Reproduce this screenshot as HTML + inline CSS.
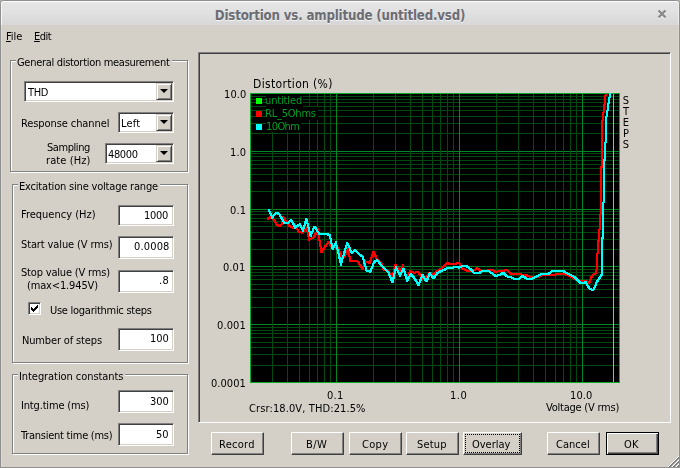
<!DOCTYPE html>
<html><head><meta charset="utf-8"><title>Distortion vs. amplitude (untitled.vsd)</title>
<style>
html,body{margin:0;padding:0;}
body{width:680px;height:468px;overflow:hidden;background:#b2aea6;position:relative;
 font-family:"DejaVu Sans Condensed","DejaVu Sans","Liberation Sans",sans-serif;font-size:11px;line-height:13px;color:#000;}
#win{position:absolute;left:0;top:0;width:678px;height:466px;background:#d4d0c8;border:1px solid #8f8f8f;border-radius:4px 4px 0 0;overflow:hidden;box-shadow:inset 1px 0 0 #dfdbd3,inset -1px 0 0 #dcd8d0;}
#tb{position:absolute;left:0;top:0;width:678px;height:24px;background:linear-gradient(#e7e7e7,#e0e0e0 50%,#d7d7d7);box-shadow:inset 0 1px 0 #fff,inset 1px 0 0 #fafafa,inset -1px 0 0 #ececec;border-radius:3px 3px 0 0;}
#title{position:absolute;left:-1px;top:7px;width:680px;text-align:center;font-weight:bold;font-size:13.2px;letter-spacing:-0.19px;line-height:16px;color:#6c6c74;text-shadow:0 1px 0 #f4f4f4;}
.t{position:absolute;white-space:nowrap;will-change:transform;}
.gb{position:absolute;border:1px solid #808080;box-shadow:1px 1px 0 #fff,inset 1px 1px 0 #fff;box-sizing:border-box;}
.gl{position:absolute;background:#d4d0c8;height:13px;}
.ed{position:absolute;box-sizing:border-box;background:#fff;border:1px solid;border-color:#808080 #fff #fff #808080;box-shadow:inset 1px 1px 0 #404040,inset -1px -1px 0 #d4d0c8;height:21px;}
.dd{position:absolute;right:1px;top:1px;width:16px;height:17px;box-sizing:border-box;background:#d4d0c8;border:1px solid;border-color:#d4d0c8 #404040 #404040 #d4d0c8;box-shadow:inset 1px 1px 0 #fff,inset -1px -1px 0 #808080;}
.dd:after{content:"";position:absolute;left:3px;top:5px;border:4px solid transparent;border-top-color:#000;border-bottom-width:0;}
.btn{position:absolute;box-sizing:border-box;height:23px;top:432px;background:#d4d0c8;border:1px solid;border-color:#fff #404040 #404040 #fff;box-shadow:inset -1px -1px 0 #808080;}
#frame{position:absolute;left:198px;top:52px;width:473px;height:371px;box-sizing:border-box;border:1px solid;border-color:#808080 #fff #fff #808080;box-shadow:inset 1px 1px 0 #404040,inset -1px -1px 0 #d4d0c8;}
#plot{position:absolute;left:0;top:0;}
</style></head>
<body>
<div id="win">
<div id="tb"></div>
<div id="title">Distortion vs. amplitude (untitled.vsd)</div>
<svg style="position:absolute;left:656px;top:8px" width="11" height="11" viewBox="0 0 11 11"><path d="M1.5 2.5L8.5 9.5M8.5 2.5L1.5 9.5" stroke="#fafafa" stroke-width="2.2" fill="none"/><path d="M1.5 1.5L8.5 8.5M8.5 1.5L1.5 8.5" stroke="#8a8a8a" stroke-width="2.4" fill="none"/></svg>
<svg style="position:absolute;left:666px;top:454px" width="13" height="13" viewBox="0 0 13 13" shape-rendering="crispEdges">
<path d="M12 1L1 12M12 5L5 12M12 9L9 12" stroke="#fff" stroke-width="1"/><path d="M12 2L2 12M12 3L3 12M12 6L6 12M12 7L7 12M12 10L10 12M12 11L11 12" stroke="#808080" stroke-width="1"/></svg>
</div>
<div class="t" style="left:6px;top:30px;letter-spacing:-0.05px;"><u>F</u>ile</div><div class="t" style="left:34px;top:30px;letter-spacing:-0.48px;"><u>E</u>dit</div>

<div class="gb" style="left:10px;top:60px;width:178px;height:112px"></div>
<div class="gl" style="left:16px;top:56px;width:156px"></div>
<div class="gb" style="left:12px;top:184px;width:176px;height:179px"></div>
<div class="gl" style="left:18px;top:180px;width:142px"></div>
<div class="gb" style="left:12px;top:374px;width:176px;height:80px"></div>
<div class="gl" style="left:18px;top:369px;width:107px"></div>
<div class="t" style="left:17px;top:56px;letter-spacing:-0.30px;">General distortion measurement</div><div class="t" style="left:19px;top:180px;letter-spacing:-0.19px;">Excitation sine voltage range</div><div class="t" style="left:19px;top:370px;letter-spacing:-0.07px;">Integration constants</div>

<div class="ed" style="left:24px;top:81px;width:150px"><i class="dd"></i></div>
<div class="ed" style="left:118px;top:112px;width:56px"><i class="dd"></i></div>
<div class="ed" style="left:105px;top:143px;width:69px"><i class="dd"></i></div>
<div class="t" style="left:28px;top:86px;letter-spacing:-0.40px;">THD</div><div class="t" style="left:21px;top:117px;letter-spacing:-0.09px;">Response channel</div><div class="t" style="left:121px;top:117px;letter-spacing:0.21px;">Left</div><div class="t" style="left:47px;top:141px;letter-spacing:-0.43px;">Sampling</div><div class="t" style="left:46px;top:154px;letter-spacing:0.10px;">rate (Hz)</div><div class="t" style="left:108px;top:148px;letter-spacing:-0.36px;">48000</div>

<div class="ed" style="left:118px;top:205px;width:56px"></div>
<div class="ed" style="left:118px;top:236px;width:56px;height:23px"></div>
<div class="ed" style="left:118px;top:270px;width:56px;height:23px"></div>
<div class="ed" style="left:28px;top:302px;width:13px;height:13px"></div>
<svg style="position:absolute;left:28px;top:302px" width="13" height="13" viewBox="0 0 13 13" shape-rendering="crispEdges"><path d="M3 5v3l2 2l5-5v-3l-5 5z" fill="#000"/></svg>
<div class="ed" style="left:118px;top:328px;width:56px;height:23px"></div>
<div class="ed" style="left:118px;top:390px;width:56px;height:23px"></div>
<div class="ed" style="left:118px;top:423px;width:56px;height:23px"></div>
<div class="t" style="left:21px;top:208px;letter-spacing:0.00px;">Frequency (Hz)</div><div class="t" style="left:144px;top:209px;letter-spacing:-0.27px;">1000</div><div class="t" style="left:21px;top:238px;letter-spacing:-0.12px;">Start value (V rms)</div><div class="t" style="left:134px;top:240px;letter-spacing:0.16px;">0.0008</div><div class="t" style="left:21px;top:266px;letter-spacing:-0.18px;">Stop value (V rms)</div><div class="t" style="left:27px;top:279px;letter-spacing:-0.15px;">(max&lt;1.945V)</div><div class="t" style="left:159px;top:274px;letter-spacing:0.32px;">.8</div><div class="t" style="left:50px;top:304px;letter-spacing:-0.27px;">Use logarithmic steps</div><div class="t" style="left:22px;top:334px;letter-spacing:-0.15px;">Number of steps</div><div class="t" style="left:150px;top:332px;letter-spacing:0.00px;">100</div><div class="t" style="left:21px;top:399px;letter-spacing:-0.17px;">Intg.time (ms)</div><div class="t" style="left:150px;top:395px;letter-spacing:-0.08px;">300</div><div class="t" style="left:21px;top:429px;letter-spacing:-0.25px;">Transient time (ms)</div><div class="t" style="left:156px;top:428px;letter-spacing:-0.16px;">50</div>

<div id="frame"></div>
<svg id="plot" width="680" height="468" viewBox="0 0 680 468" shape-rendering="crispEdges">
<rect x="250" y="93" width="370" height="290" fill="#000"/>
<rect x="251" y="151" width="368" height="1" fill="#008824"/><rect x="251" y="133" width="368" height="1" fill="#004a12"/><rect x="251" y="123" width="368" height="1" fill="#004a12"/><rect x="251" y="116" width="368" height="1" fill="#004a12"/><rect x="251" y="110" width="368" height="1" fill="#004a12"/><rect x="251" y="106" width="368" height="1" fill="#004a12"/><rect x="251" y="102" width="368" height="1" fill="#004a12"/><rect x="251" y="99" width="368" height="1" fill="#004a12"/><rect x="251" y="96" width="368" height="1" fill="#004a12"/><rect x="251" y="209" width="368" height="1" fill="#008824"/><rect x="251" y="191" width="368" height="1" fill="#004a12"/><rect x="251" y="181" width="368" height="1" fill="#004a12"/><rect x="251" y="174" width="368" height="1" fill="#004a12"/><rect x="251" y="168" width="368" height="1" fill="#004a12"/><rect x="251" y="164" width="368" height="1" fill="#004a12"/><rect x="251" y="160" width="368" height="1" fill="#004a12"/><rect x="251" y="156" width="368" height="1" fill="#004a12"/><rect x="251" y="153" width="368" height="1" fill="#004a12"/><rect x="251" y="266" width="368" height="1" fill="#008824"/><rect x="251" y="249" width="368" height="1" fill="#004a12"/><rect x="251" y="239" width="368" height="1" fill="#004a12"/><rect x="251" y="232" width="368" height="1" fill="#004a12"/><rect x="251" y="226" width="368" height="1" fill="#004a12"/><rect x="251" y="221" width="368" height="1" fill="#004a12"/><rect x="251" y="218" width="368" height="1" fill="#004a12"/><rect x="251" y="214" width="368" height="1" fill="#004a12"/><rect x="251" y="211" width="368" height="1" fill="#004a12"/><rect x="251" y="324" width="368" height="1" fill="#008824"/><rect x="251" y="307" width="368" height="1" fill="#004a12"/><rect x="251" y="297" width="368" height="1" fill="#004a12"/><rect x="251" y="289" width="368" height="1" fill="#004a12"/><rect x="251" y="284" width="368" height="1" fill="#004a12"/><rect x="251" y="279" width="368" height="1" fill="#004a12"/><rect x="251" y="275" width="368" height="1" fill="#004a12"/><rect x="251" y="272" width="368" height="1" fill="#004a12"/><rect x="251" y="269" width="368" height="1" fill="#004a12"/><rect x="251" y="365" width="368" height="1" fill="#004a12"/><rect x="251" y="354" width="368" height="1" fill="#004a12"/><rect x="251" y="347" width="368" height="1" fill="#004a12"/><rect x="251" y="342" width="368" height="1" fill="#004a12"/><rect x="251" y="337" width="368" height="1" fill="#004a12"/><rect x="251" y="333" width="368" height="1" fill="#004a12"/><rect x="251" y="330" width="368" height="1" fill="#004a12"/><rect x="251" y="327" width="368" height="1" fill="#004a12"/><rect x="272" y="94" width="1" height="288" fill="#004a12"/><rect x="287" y="94" width="1" height="288" fill="#004a12"/><rect x="299" y="94" width="1" height="288" fill="#004a12"/><rect x="309" y="94" width="1" height="288" fill="#004a12"/><rect x="317" y="94" width="1" height="288" fill="#004a12"/><rect x="324" y="94" width="1" height="288" fill="#004a12"/><rect x="330" y="94" width="1" height="288" fill="#004a12"/><rect x="336" y="94" width="1" height="288" fill="#008824"/><rect x="373" y="94" width="1" height="288" fill="#004a12"/><rect x="395" y="94" width="1" height="288" fill="#004a12"/><rect x="410" y="94" width="1" height="288" fill="#004a12"/><rect x="422" y="94" width="1" height="288" fill="#004a12"/><rect x="432" y="94" width="1" height="288" fill="#004a12"/><rect x="440" y="94" width="1" height="288" fill="#004a12"/><rect x="447" y="94" width="1" height="288" fill="#004a12"/><rect x="453" y="94" width="1" height="288" fill="#004a12"/><rect x="459" y="94" width="1" height="288" fill="#008824"/><rect x="496" y="94" width="1" height="288" fill="#004a12"/><rect x="518" y="94" width="1" height="288" fill="#004a12"/><rect x="533" y="94" width="1" height="288" fill="#004a12"/><rect x="545" y="94" width="1" height="288" fill="#004a12"/><rect x="555" y="94" width="1" height="288" fill="#004a12"/><rect x="563" y="94" width="1" height="288" fill="#004a12"/><rect x="570" y="94" width="1" height="288" fill="#004a12"/><rect x="576" y="94" width="1" height="288" fill="#004a12"/><rect x="582" y="94" width="1" height="288" fill="#008824"/>
<rect x="613" y="94" width="1" height="288" fill="#c6bc10"/>
<rect x="250" y="93" width="370" height="1" fill="#0cac28"/><rect x="250" y="382" width="370" height="1" fill="#0cac28"/>
<rect x="250" y="93" width="1" height="290" fill="#0cac28"/><rect x="619" y="93" width="1" height="290" fill="#0cac28"/>
<rect x="266" y="94" width="37" height="13" fill="#000"/>
<rect x="266" y="107" width="52" height="13" fill="#000"/>
<rect x="266" y="120" width="35" height="12" fill="#000"/>
<rect x="256" y="98" width="6" height="6" fill="#00ff00"/>
<rect x="256" y="111" width="6" height="6" fill="#ff0000"/>
<rect x="256" y="124" width="6" height="6" fill="#00ffff"/>
<g fill="none" stroke="#ff0000" stroke-width="1"><polyline points="267.3,218.2 270.0,216.7 272.9,218.7 276.0,224.0 278.9,225.5 281.0,224.4 281.8,221.6 282.7,217.1 287.5,222.5 288.9,225.4 292.3,227.1 295.0,224.7 297.7,230.9 301.7,232.2 306.3,228.3 308.9,239.2 313.3,236.7 317.2,229.6 321.0,251.4 328.1,241.2 330.7,245.7 333.5,246.5 337.2,247.5 341.7,257.1 344.2,255.8 347.5,248.7 350.0,260.9 357.1,260.9 362.2,268.6 364.8,260.9 369.2,262.2 373.1,251.3 376.9,259.6 380.8,262.8 383.3,269.2 387.8,270.5 391.7,277.5 394.9,264.1 399.4,270.5 402.4,265.5 406.1,279.0 409.5,270.9 413.6,272.2 417.5,271.5 419.4,274.1 422.5,278.5 425.8,276.0 429.2,272.5 433.1,274.1 436.7,270.9 440.5,268.3 446.5,262.5 450.8,263.9 454.6,263.2 458.5,262.5 462.3,268.3 466.2,270.3 470.0,271.1 474.0,269.6 476.5,267.5 480.4,270.3 486.2,270.3 488.7,269.6 491.9,269.6 495.1,271.3 502.8,270.3 506.7,269.6 510.5,273.1 514.4,273.9 520.8,273.9 525.9,274.8 531.0,276.7 538.7,276.0 541.3,274.9 551.7,274.8 558.7,273.1 562.6,273.1 566.4,274.4 570.3,276.0 576.0,279.9 585.0,280.5 588.9,282.5 591.4,275.4 595.9,272.2 596.5,258.7 597.8,243.3 598.7,231.5 599.6,225.5 599.7,214.5 600.4,213.0 600.9,169.5 601.3,159.5 601.3,124.5 602.7,115.2 604.0,104.0 605.2,93.5"/><polyline points="268.3,218.2 271.0,216.7 273.9,218.7 277.0,224.0 279.9,225.5 282.0,224.4 282.8,221.6 283.7,217.1 288.5,222.5 289.9,225.4 293.3,227.1 296.0,224.7 298.7,230.9 302.7,232.2 307.3,228.3 309.9,239.2 314.3,236.7 318.2,229.6 322.0,251.4 329.1,241.2 331.7,245.7 334.5,246.5 338.2,247.5 342.7,257.1 345.2,255.8 348.5,248.7 351.0,260.9 358.1,260.9 363.2,268.6 365.8,260.9 370.2,262.2 374.1,251.3 377.9,259.6 381.8,262.8 384.3,269.2 388.8,270.5 392.7,277.5 395.9,264.1 400.4,270.5 403.4,265.5 407.1,279.0 410.5,270.9 414.6,272.2 418.5,271.5 420.4,274.1 423.5,278.5 426.8,276.0 430.2,272.5 434.1,274.1 437.7,270.9 441.5,268.3 447.5,262.5 451.8,263.9 455.6,263.2 459.5,262.5 463.3,268.3 467.2,270.3 471.0,271.1 475.0,269.6 477.5,267.5 481.4,270.3 487.2,270.3 489.7,269.6 492.9,269.6 496.1,271.3 503.8,270.3 507.7,269.6 511.5,273.1 515.4,273.9 521.8,273.9 526.9,274.8 532.0,276.7 539.7,276.0 542.3,274.9 552.7,274.8 559.7,273.1 563.6,273.1 567.4,274.4 571.3,276.0 577.0,279.9 586.0,280.5 589.9,282.5 592.4,275.4 596.9,272.2 597.5,258.7 598.8,243.3 599.7,231.5 600.6,225.5 600.7,214.5 601.4,213.0 601.9,169.5 602.3,159.5 602.3,124.5 603.7,115.2 605.0,104.0 606.2,93.5"/><polyline points="267.3,219.2 270.0,217.7 272.9,219.7 276.0,225.0 278.9,226.5 281.0,225.4 281.8,222.6 282.7,218.1 287.5,223.5 288.9,226.4 292.3,228.1 295.0,225.7 297.7,231.9 301.7,233.2 306.3,229.3 308.9,240.2 313.3,237.7 317.2,230.6 321.0,252.4 328.1,242.2 330.7,246.7 333.5,247.5 337.2,248.5 341.7,258.1 344.2,256.8 347.5,249.7 350.0,261.9 357.1,261.9 362.2,269.6 364.8,261.9 369.2,263.2 373.1,252.3 376.9,260.6 380.8,263.8 383.3,270.2 387.8,271.5 391.7,278.5 394.9,265.1 399.4,271.5 402.4,266.5 406.1,280.0 409.5,271.9 413.6,273.2 417.5,272.5 419.4,275.1 422.5,279.5 425.8,277.0 429.2,273.5 433.1,275.1 436.7,271.9 440.5,269.3 446.5,263.5 450.8,264.9 454.6,264.2 458.5,263.5 462.3,269.3 466.2,271.3 470.0,272.1 474.0,270.6 476.5,268.5 480.4,271.3 486.2,271.3 488.7,270.6 491.9,270.6 495.1,272.3 502.8,271.3 506.7,270.6 510.5,274.1 514.4,274.9 520.8,274.9 525.9,275.8 531.0,277.7 538.7,277.0 541.3,275.9 551.7,275.8 558.7,274.1 562.6,274.1 566.4,275.4 570.3,277.0 576.0,280.9 585.0,281.5 588.9,283.5 591.4,276.4 595.9,273.2 596.5,259.7 597.8,244.3 598.7,232.5 599.6,226.5 599.7,215.5 600.4,214.0 600.9,170.5 601.3,160.5 601.3,125.5 602.7,116.2 604.0,105.0 605.2,94.5"/><polyline points="268.3,219.2 271.0,217.7 273.9,219.7 277.0,225.0 279.9,226.5 282.0,225.4 282.8,222.6 283.7,218.1 288.5,223.5 289.9,226.4 293.3,228.1 296.0,225.7 298.7,231.9 302.7,233.2 307.3,229.3 309.9,240.2 314.3,237.7 318.2,230.6 322.0,252.4 329.1,242.2 331.7,246.7 334.5,247.5 338.2,248.5 342.7,258.1 345.2,256.8 348.5,249.7 351.0,261.9 358.1,261.9 363.2,269.6 365.8,261.9 370.2,263.2 374.1,252.3 377.9,260.6 381.8,263.8 384.3,270.2 388.8,271.5 392.7,278.5 395.9,265.1 400.4,271.5 403.4,266.5 407.1,280.0 410.5,271.9 414.6,273.2 418.5,272.5 420.4,275.1 423.5,279.5 426.8,277.0 430.2,273.5 434.1,275.1 437.7,271.9 441.5,269.3 447.5,263.5 451.8,264.9 455.6,264.2 459.5,263.5 463.3,269.3 467.2,271.3 471.0,272.1 475.0,270.6 477.5,268.5 481.4,271.3 487.2,271.3 489.7,270.6 492.9,270.6 496.1,272.3 503.8,271.3 507.7,270.6 511.5,274.1 515.4,274.9 521.8,274.9 526.9,275.8 532.0,277.7 539.7,277.0 542.3,275.9 552.7,275.8 559.7,274.1 563.6,274.1 567.4,275.4 571.3,277.0 577.0,280.9 586.0,281.5 589.9,283.5 592.4,276.4 596.9,273.2 597.5,259.7 598.8,244.3 599.7,232.5 600.6,226.5 600.7,215.5 601.4,214.0 601.9,170.5 602.3,160.5 602.3,125.5 603.7,116.2 605.0,105.0 606.2,94.5"/></g>
<g fill="none" stroke="#00ffff" stroke-width="1"><polyline points="268.2,209.1 271.7,216.8 275.5,212.1 278.7,213.6 283.9,222.6 287.1,222.6 290.9,219.4 294.8,227.1 299.2,223.9 302.5,229.6 305.9,218.7 310.1,235.4 314.0,225.8 318.5,233.1 325.5,233.1 329.4,234.8 332.1,248.8 335.5,242.4 340.4,263.5 346.8,242.3 351.3,252.6 354.5,250.0 362.2,256.4 366.0,269.9 369.9,271.2 373.7,261.5 376.9,259.6 380.8,264.8 387.8,271.8 391.9,282.1 395.5,267.3 399.4,275.0 403.1,268.5 406.8,280.0 410.4,273.5 414.2,278.0 418.1,285.0 421.9,274.1 426.0,281.2 429.2,272.8 433.1,278.0 436.7,272.8 440.5,270.3 443.7,269.6 447.5,267.1 450.8,268.0 454.6,266.4 459.1,267.1 462.3,265.1 466.2,265.8 470.0,268.5 473.4,272.2 479.1,272.2 481.0,270.9 488.7,270.9 495.1,275.4 498.3,274.8 502.8,272.2 506.7,276.0 510.5,276.7 513.7,278.2 518.9,278.2 522.1,275.4 525.9,278.0 531.7,278.0 536.2,276.0 540.7,273.7 548.5,273.1 551.7,270.5 562.6,270.5 566.4,272.6 574.1,276.7 580.5,282.8 583.1,282.8 585.0,281.5 588.9,288.0 591.4,289.2 593.3,288.9 596.5,281.2 601.7,273.5 601.7,238.5 602.3,236.5 602.4,203.5 603.5,201.0 603.7,164.5 604.0,159.5 604.0,145.5 605.0,143.0 605.3,120.5 606.7,112.5 607.7,104.5 608.2,102.5 609.5,93.5"/><polyline points="269.2,209.1 272.7,216.8 276.5,212.1 279.7,213.6 284.9,222.6 288.1,222.6 291.9,219.4 295.8,227.1 300.2,223.9 303.5,229.6 306.9,218.7 311.1,235.4 315.0,225.8 319.5,233.1 326.5,233.1 330.4,234.8 333.1,248.8 336.5,242.4 341.4,263.5 347.8,242.3 352.3,252.6 355.5,250.0 363.2,256.4 367.0,269.9 370.9,271.2 374.7,261.5 377.9,259.6 381.8,264.8 388.8,271.8 392.9,282.1 396.5,267.3 400.4,275.0 404.1,268.5 407.8,280.0 411.4,273.5 415.2,278.0 419.1,285.0 422.9,274.1 427.0,281.2 430.2,272.8 434.1,278.0 437.7,272.8 441.5,270.3 444.7,269.6 448.5,267.1 451.8,268.0 455.6,266.4 460.1,267.1 463.3,265.1 467.2,265.8 471.0,268.5 474.4,272.2 480.1,272.2 482.0,270.9 489.7,270.9 496.1,275.4 499.3,274.8 503.8,272.2 507.7,276.0 511.5,276.7 514.7,278.2 519.9,278.2 523.1,275.4 526.9,278.0 532.7,278.0 537.2,276.0 541.7,273.7 549.5,273.1 552.7,270.5 563.6,270.5 567.4,272.6 575.1,276.7 581.5,282.8 584.1,282.8 586.0,281.5 589.9,288.0 592.4,289.2 594.3,288.9 597.5,281.2 602.7,273.5 602.7,238.5 603.3,236.5 603.4,203.5 604.5,201.0 604.7,164.5 605.0,159.5 605.0,145.5 606.0,143.0 606.3,120.5 607.7,112.5 608.7,104.5 609.2,102.5 610.5,93.5"/><polyline points="268.2,210.1 271.7,217.8 275.5,213.1 278.7,214.6 283.9,223.6 287.1,223.6 290.9,220.4 294.8,228.1 299.2,224.9 302.5,230.6 305.9,219.7 310.1,236.4 314.0,226.8 318.5,234.1 325.5,234.1 329.4,235.8 332.1,249.8 335.5,243.4 340.4,264.5 346.8,243.3 351.3,253.6 354.5,251.0 362.2,257.4 366.0,270.9 369.9,272.2 373.7,262.5 376.9,260.6 380.8,265.8 387.8,272.8 391.9,283.1 395.5,268.3 399.4,276.0 403.1,269.5 406.8,281.0 410.4,274.5 414.2,279.0 418.1,286.0 421.9,275.1 426.0,282.2 429.2,273.8 433.1,279.0 436.7,273.8 440.5,271.3 443.7,270.6 447.5,268.1 450.8,269.0 454.6,267.4 459.1,268.1 462.3,266.1 466.2,266.8 470.0,269.5 473.4,273.2 479.1,273.2 481.0,271.9 488.7,271.9 495.1,276.4 498.3,275.8 502.8,273.2 506.7,277.0 510.5,277.7 513.7,279.2 518.9,279.2 522.1,276.4 525.9,279.0 531.7,279.0 536.2,277.0 540.7,274.7 548.5,274.1 551.7,271.5 562.6,271.5 566.4,273.6 574.1,277.7 580.5,283.8 583.1,283.8 585.0,282.5 588.9,289.0 591.4,290.2 593.3,289.9 596.5,282.2 601.7,274.5 601.7,239.5 602.3,237.5 602.4,204.5 603.5,202.0 603.7,165.5 604.0,160.5 604.0,146.5 605.0,144.0 605.3,121.5 606.7,113.5 607.7,105.5 608.2,103.5 609.5,94.5"/><polyline points="269.2,210.1 272.7,217.8 276.5,213.1 279.7,214.6 284.9,223.6 288.1,223.6 291.9,220.4 295.8,228.1 300.2,224.9 303.5,230.6 306.9,219.7 311.1,236.4 315.0,226.8 319.5,234.1 326.5,234.1 330.4,235.8 333.1,249.8 336.5,243.4 341.4,264.5 347.8,243.3 352.3,253.6 355.5,251.0 363.2,257.4 367.0,270.9 370.9,272.2 374.7,262.5 377.9,260.6 381.8,265.8 388.8,272.8 392.9,283.1 396.5,268.3 400.4,276.0 404.1,269.5 407.8,281.0 411.4,274.5 415.2,279.0 419.1,286.0 422.9,275.1 427.0,282.2 430.2,273.8 434.1,279.0 437.7,273.8 441.5,271.3 444.7,270.6 448.5,268.1 451.8,269.0 455.6,267.4 460.1,268.1 463.3,266.1 467.2,266.8 471.0,269.5 474.4,273.2 480.1,273.2 482.0,271.9 489.7,271.9 496.1,276.4 499.3,275.8 503.8,273.2 507.7,277.0 511.5,277.7 514.7,279.2 519.9,279.2 523.1,276.4 526.9,279.0 532.7,279.0 537.2,277.0 541.7,274.7 549.5,274.1 552.7,271.5 563.6,271.5 567.4,273.6 575.1,277.7 581.5,283.8 584.1,283.8 586.0,282.5 589.9,289.0 592.4,290.2 594.3,289.9 597.5,282.2 602.7,274.5 602.7,239.5 603.3,237.5 603.4,204.5 604.5,202.0 604.7,165.5 605.0,160.5 605.0,146.5 606.0,144.0 606.3,121.5 607.7,113.5 608.7,105.5 609.2,103.5 610.5,94.5"/></g>
</svg>
<div class="t" style="left:253px;top:78px;letter-spacing:0.34px;font-size:12px;">Distortion (%)</div><div class="t" style="left:224px;top:88px;letter-spacing:0.11px;">10.0</div><div class="t" style="left:230px;top:146px;letter-spacing:0.16px;">1.0</div><div class="t" style="left:230px;top:204px;letter-spacing:0.16px;">0.1</div><div class="t" style="left:223px;top:261px;letter-spacing:0.05px;">0.01</div><div class="t" style="left:217px;top:319px;letter-spacing:0.12px;">0.001</div><div class="t" style="left:211px;top:377px;letter-spacing:0.03px;">0.0001</div><div class="t" style="left:327px;top:389px;letter-spacing:0.32px;">0.1</div><div class="t" style="left:450px;top:389px;letter-spacing:0.56px;">1.0</div><div class="t" style="left:570px;top:389px;letter-spacing:0.11px;">10.0</div><div class="t" style="left:249px;top:402px;letter-spacing:0.11px;">Crsr:18.0V, THD:21.5%</div><div class="t" style="left:546px;top:401px;letter-spacing:-0.23px;">Voltage (V rms)</div><div class="t" style="left:265px;top:94px;letter-spacing:-0.14px;color:#00a026">untitled</div><div class="t" style="left:265px;top:107px;letter-spacing:-0.21px;color:#00a026">RL_5Ohms</div><div class="t" style="left:266px;top:120px;letter-spacing:-0.60px;color:#00a026">10Ohm</div>
<div class="t" style="left:621px;top:95px;width:10px;text-align:center;line-height:11px;white-space:normal">S<br>T<br>E<br>P<br>S</div>

<div class="btn" style="left:211px;width:53px"></div>
<div class="btn" style="left:291px;width:53px"></div>
<div class="btn" style="left:349px;width:53px"></div>
<div class="btn" style="left:406px;width:53px"></div>
<div class="btn" style="left:463px;width:59px"><i style="position:absolute;left:1px;top:1px;right:1px;bottom:1px;border:1px dotted #000"></i></div>
<div class="btn" style="left:547px;width:53px"></div>
<div class="btn" style="left:606px;width:53px;border-color:#000;box-shadow:inset 1px 1px 0 #fff,inset -1px -1px 0 #404040,inset -2px -2px 0 #808080"></div>
<div class="t" style="left:219px;top:438px;letter-spacing:0.26px;">Record</div><div class="t" style="left:306px;top:438px;letter-spacing:0.40px;">B/W</div><div class="t" style="left:362px;top:438px;letter-spacing:0.32px;">Copy</div><div class="t" style="left:417px;top:438px;letter-spacing:0.16px;">Setup</div><div class="t" style="left:472px;top:438px;letter-spacing:-0.03px;">Overlay</div><div class="t" style="left:556px;top:438px;letter-spacing:0.03px;">Cancel</div><div class="t" style="left:624px;top:438px;letter-spacing:0.32px;">OK</div>

</body></html>
